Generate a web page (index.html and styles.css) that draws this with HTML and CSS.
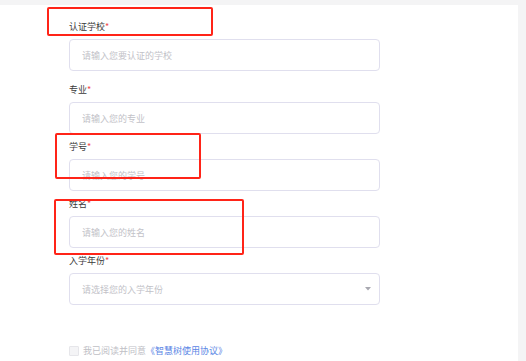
FILE: index.html
```html
<!DOCTYPE html>
<html lang="zh-CN">
<head>
<meta charset="utf-8">
<title>认证</title>
<link rel="stylesheet" href="styles.css">
</head>
<body>
<div class="page">
  <div class="panel">
    <form class="form">
      <div class="field field-first">
        <label class="label">认证学校<span class="req">*</span></label>
        <input class="input" type="text" placeholder="请输入您要认证的学校">
      </div>
      <div class="field">
        <label class="label">专业<span class="req">*</span></label>
        <input class="input" type="text" placeholder="请输入您的专业">
      </div>
      <div class="field">
        <label class="label">学号<span class="req">*</span></label>
        <input class="input" type="text" placeholder="请输入您的学号">
      </div>
      <div class="field">
        <label class="label">姓名<span class="req">*</span></label>
        <input class="input" type="text" placeholder="请输入您的姓名">
      </div>
      <div class="field">
        <label class="label">入学年份<span class="req">*</span></label>
        <div class="select">
          <span class="select-text">请选择您的入学年份</span>
          <svg class="arrow" width="6" height="4" viewBox="0 0 6 4"><path d="M0 0 H6 L3 3.5 Z" fill="#a8a8b0"/></svg>
        </div>
      </div>
      <div class="agree">
        <span class="check"></span>
        <span class="agree-text">我已阅读并同意</span>
        <a class="agree-link">《智慧树使用协议》</a>
      </div>
    </form>
    <div class="mark mark-1"></div>
    <div class="mark mark-2"></div>
    <div class="mark mark-3"></div>
  </div>
</div>
</body>
</html>
```

FILE: styles.css
```css
* { box-sizing: border-box; }
html, body {
  margin: 0;
  padding: 0;
  background: #f4f4f5;
  font-family: "Noto Sans CJK SC", "Noto Sans", sans-serif;
}
.page {
  padding: 5px 8px 0 0;
  height: 361px;
}
.panel {
  position: relative;
  background: #ffffff;
  height: 356px;
}
.form {
  padding: 16px 0 0 69px;
  width: 380px;
  display: flex;
  flex-direction: column;
}
.field {
  display: flex;
  flex-direction: column;
  margin-bottom: 7px;
}
.field-first {
  margin-bottom: 13px;
}
.label {
  font-size: 9px;
  line-height: 12px;
  color: #3a3a3a;
  margin-bottom: 6px;
}
.req {
  color: #f04a4a;
}
.input, .select {
  width: 311px;
  height: 32px;
  border: 1px solid #e0dfee;
  border-radius: 4px;
  padding: 0 12px;
  font-family: inherit;
  font-size: 9px;
  color: #333;
  outline: none;
  background: #fff;
}
.input::placeholder {
  color: #c2c2c8;
}
.select {
  display: flex;
  align-items: center;
  justify-content: space-between;
  padding-right: 8px;
}
.select-text {
  color: #c2c2c8;
}
.arrow {
  display: block;
}
.agree {
  margin-top: 33px;
  display: flex;
  align-items: center;
  font-size: 9px;
  line-height: 12px;
}
.check {
  width: 10px;
  height: 10px;
  border: 1px solid #e6e6ea;
  background: #f4f4f6;
  border-radius: 1px;
  margin-right: 4px;
}
.agree-text {
  color: #c0c0c6;
}
.agree-link {
  color: #5b86e5;
}
.mark {
  position: absolute;
  border: 2px solid #ff2418;
  border-radius: 2px;
}
.mark-1 { left: 47px; top: 2px; width: 166px; height: 29px; }
.mark-2 { left: 55px; top: 128px; width: 146px; height: 46px; }
.mark-3 { left: 54px; top: 194px; width: 190px; height: 56px; }
```
